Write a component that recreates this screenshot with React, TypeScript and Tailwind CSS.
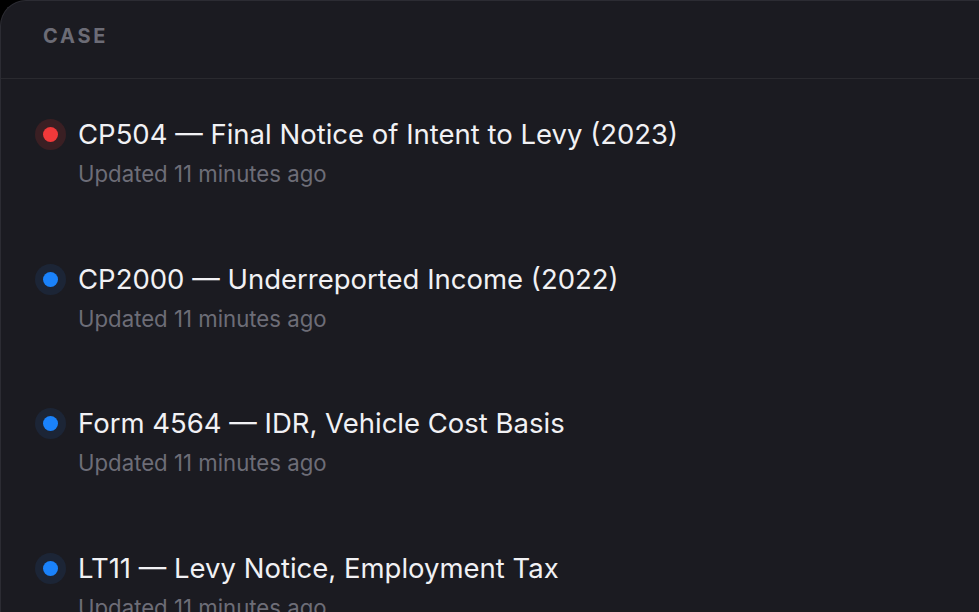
import React from 'react';

type CaseItem = {
  title: string;
  updated: string;
  tone: 'red' | 'blue';
};

const cases: CaseItem[] = [
  { title: 'CP504 — Final Notice of Intent to Levy (2023)', updated: 'Updated 11 minutes ago', tone: 'red' },
  { title: 'CP2000 — Underreported Income (2022)', updated: 'Updated 11 minutes ago', tone: 'blue' },
  { title: 'Form 4564 — IDR, Vehicle Cost Basis', updated: 'Updated 11 minutes ago', tone: 'blue' },
  { title: 'LT11 — Levy Notice, Employment Tax', updated: 'Updated 11 minutes ago', tone: 'blue' },
];

const StatusDot = ({ tone }: { tone: 'red' | 'blue' }) => (
  <span
    className={
      tone === 'red'
        ? 'mt-[10px] block h-[15px] w-[15px] shrink-0 rounded-full bg-[#f0393a] shadow-[0_0_0_8px_#3a1f23]'
        : 'mt-[10px] block h-[15px] w-[15px] shrink-0 rounded-full bg-[#1a82fb] shadow-[0_0_0_8px_#1c2536]'
    }
  />
);

const CaseRow = ({ item }: { item: CaseItem }) => (
  <div className="flex items-start gap-[20px] pl-[42px] pr-6 pt-[38px] pb-[35.5px]">
    <StatusDot tone={item.tone} />
    <div className="min-w-0">
      <div className="text-[27.5px] leading-[34px] text-[#f1f1f4] whitespace-nowrap">{item.title}</div>
      <div className="mt-[9px] text-[22.2px] leading-[28px] text-[#6d6d77] whitespace-nowrap">{item.updated}</div>
    </div>
  </div>
);

export default function App() {
  return (
    <div className="h-[612px] w-[979px] overflow-hidden bg-black font-['Inter','Liberation_Sans',sans-serif]">
      <div className="h-full rounded-tl-[26px] border-l border-t border-[#2c2c33] bg-[#1b1b21]">
        <div className="flex h-[78px] items-center border-b border-[#2a2a2f] pl-[42px]">
          <span className="mt-[-8px] text-[20px] font-bold tracking-[0.14em] text-[#6c6c76]">CASE</span>
        </div>
        <div>
          {cases.map((c, i) => (
            <CaseRow key={i} item={c} />
          ))}
        </div>
      </div>
    </div>
  );
}
